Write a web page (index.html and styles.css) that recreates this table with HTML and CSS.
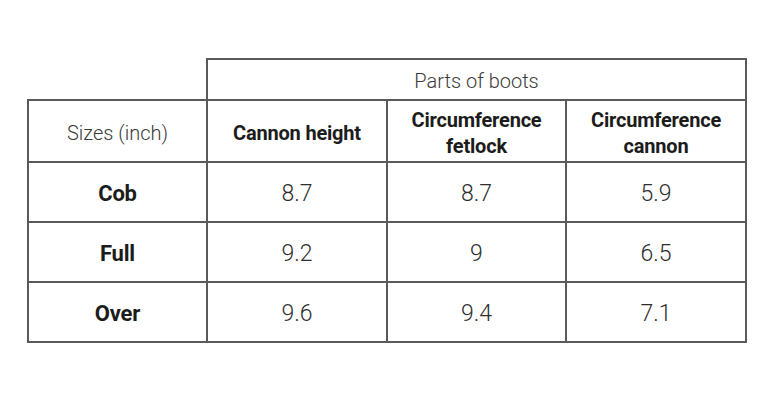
FILE: index.html
```html
<!DOCTYPE html>
<html>
<head>
<meta charset="utf-8">
<link rel="stylesheet" href="styles.css">
</head>
<body>
<div class="page">
<table class="sizes">
  <colgroup>
    <col class="c1"><col class="c2"><col class="c3"><col class="c4">
  </colgroup>
  <tr class="r-top">
    <td class="blank"></td>
    <th colspan="3" class="light">Parts of boots</th>
  </tr>
  <tr class="r-head">
    <th class="light">Sizes (inch)</th>
    <th>Cannon height</th>
    <th>Circumference<br>fetlock</th>
    <th>Circumference<br>cannon</th>
  </tr>
  <tr class="r-data">
    <th>Cob</th><td>8.7</td><td>8.7</td><td>5.9</td>
  </tr>
  <tr class="r-data">
    <th>Full</th><td>9.2</td><td>9</td><td>6.5</td>
  </tr>
  <tr class="r-data">
    <th>Over</th><td>9.6</td><td>9.4</td><td>7.1</td>
  </tr>
</table>
</div>
</body>
</html>
```
FILE: styles.css
```css
html, body {
  margin: 0;
  padding: 0;
  background: #ffffff;
}
.page {
  padding: 58px 0 0 27px;
}
.sizes {
  border-collapse: collapse;
  table-layout: fixed;
  width: 720px;
  font-family: Roboto, "Liberation Sans", sans-serif;
}
.c1 { width: 179px; }
.c2 { width: 180px; }
.c3 { width: 179px; }
.c4 { width: 180px; }
.sizes th, .sizes td {
  border: 2px solid #5a5a5a;
  text-align: center;
  vertical-align: middle;
  padding: 3px 0 0 0;
}
.sizes td.blank {
  border-top: none;
  border-left: none;
}
.sizes th {
  font-weight: 700;
  font-size: 20px;
  color: #1c1c1c;
  line-height: 26px;
  letter-spacing: -0.2px;
}
.sizes th.light {
  font-weight: 300;
  color: #3a3a3a;
  letter-spacing: 0;
}
.sizes td {
  font-weight: 300;
  font-size: 23px;
  color: #2e2e2e;
}
.r-data th {
  font-size: 22px;
}
.r-top { height: 41px; }
.r-head { height: 62px; }
.r-data { height: 60px; }
```
